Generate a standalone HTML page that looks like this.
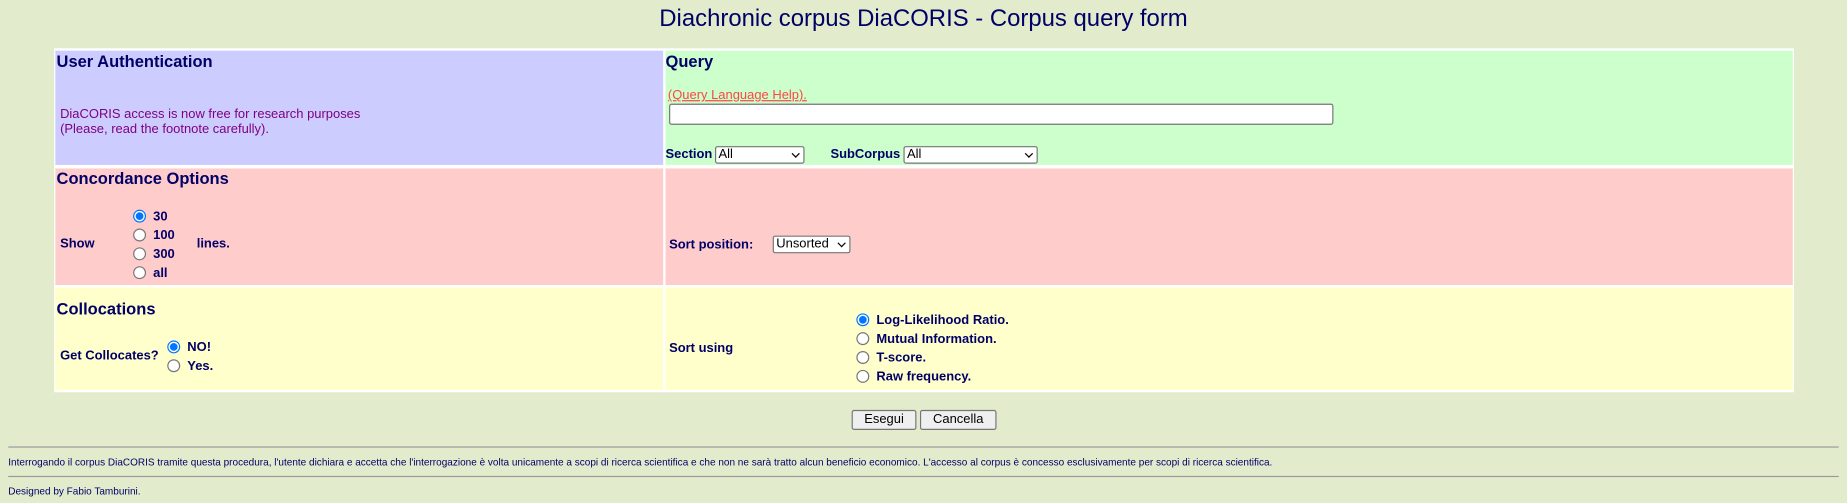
<!DOCTYPE html>
<html><head><meta charset="utf-8"><style>
html,body{margin:0;padding:0}
body{width:1847px;height:503px;background:#e3ebcd;font-family:"Liberation Sans",sans-serif;color:#000066;position:relative;overflow:hidden}
#w{position:absolute;left:0;top:0;width:1568px;height:427px;transform:scale(1.17793);transform-origin:0 0}
.a{position:absolute;white-space:nowrap}
.c{position:absolute}
h3{margin:0;font-size:14px;font-weight:bold;position:absolute}
.b{font-size:11px;font-weight:bold}
.r{position:absolute;width:9px;height:9px;border:1px solid #767676;border-radius:50%;background:#fff}
.r.on{border-color:#0075ff;background:radial-gradient(circle,#0075ff 0 3px,#fff 3.5px)}
.sel{position:absolute;border:1px solid #767676;border-radius:2px;background:#fff;font-size:11px;height:13px;line-height:13px;padding-left:2px;color:#000}
.sel:after{content:"";position:absolute;right:4px;top:3px;width:4px;height:4px;border-right:1.5px solid #000;border-bottom:1.5px solid #000;transform:rotate(45deg)}
.btn{position:absolute;border:1px solid #767676;border-radius:2px;background:#efefef;font-size:11px;color:#000;text-align:center;height:15px;line-height:15px}
hr{position:absolute;margin:0;border:0;border-top:1px solid #999;height:0}
</style></head><body><div id="w">
<div class="a" style="left:0;width:1568px;text-align:center;top:5px;font-size:20.3px">Diachronic corpus DiaCORIS - Corpus query form</div>
<div class="c" style="left:46px;top:41px;width:1477px;height:292px;background:#fff"></div>
<div class="c" style="left:47px;top:43px;width:516px;height:97px;background:#ccccff"></div>
<div class="c" style="left:565px;top:43px;width:957px;height:97px;background:#ccffcc"></div>
<div class="c" style="left:47px;top:143px;width:516px;height:99px;background:#ffcccc"></div>
<div class="c" style="left:565px;top:143px;width:957px;height:99px;background:#ffcccc"></div>
<div class="c" style="left:47px;top:244px;width:516px;height:87px;background:#ffffcc"></div>
<div class="c" style="left:565px;top:244px;width:957px;height:87px;background:#ffffcc"></div>

<h3 style="left:48px;top:44px">User Authentication</h3>
<div class="a" style="left:51px;top:91px;font-size:11px;color:#800080;line-height:13px">DiaCORIS access is now free for research purposes<br>(Please, read the footnote carefully).</div>

<h3 style="left:565px;top:44px">Query</h3>
<div class="a" style="left:567px;top:75px;font-size:11px;color:#ff4444;text-decoration:underline">(Query Language Help).</div>
<div class="c" style="left:568px;top:88px;width:562px;height:16px;border:1px solid #767676;border-radius:2px;background:#fff"></div>
<div class="a b" style="left:565px;top:125px">Section</div>
<div class="sel" style="left:607px;top:124px;width:72px">All</div>
<div class="a b" style="left:705px;top:125px">SubCorpus</div>
<div class="sel" style="left:767px;top:124px;width:110px">All</div>

<h3 style="left:48px;top:143px">Concordance Options</h3>
<div class="a b" style="left:51px;top:201px">Show</div>
<div class="r on" style="left:113px;top:178px"></div><div class="a b" style="left:130px;top:178px">30</div>
<div class="r" style="left:113px;top:194px"></div><div class="a b" style="left:130px;top:194px">100</div>
<div class="r" style="left:113px;top:210px"></div><div class="a b" style="left:130px;top:210px">300</div>
<div class="r" style="left:113px;top:226px"></div><div class="a b" style="left:130px;top:226px">all</div>
<div class="a b" style="left:167px;top:201px">lines.</div>
<div class="a b" style="left:568px;top:202px">Sort position:</div>
<div class="sel" style="left:656px;top:200px;width:62px">Unsorted</div>

<h3 style="left:48px;top:254px">Collocations</h3>
<div class="a b" style="left:51px;top:296px">Get Collocates?</div>
<div class="r on" style="left:142px;top:289px"></div><div class="a b" style="left:159px;top:289px">NO!</div>
<div class="r" style="left:142px;top:305px"></div><div class="a b" style="left:159px;top:305px">Yes.</div>
<div class="a b" style="left:568px;top:290px">Sort using</div>
<div class="r on" style="left:727px;top:266px"></div><div class="a b" style="left:744px;top:266px">Log-Likelihood Ratio.</div>
<div class="r" style="left:727px;top:282px"></div><div class="a b" style="left:744px;top:282px">Mutual Information.</div>
<div class="r" style="left:727px;top:298px"></div><div class="a b" style="left:744px;top:298px">T-score.</div>
<div class="r" style="left:727px;top:314px"></div><div class="a b" style="left:744px;top:314px">Raw frequency.</div>

<div class="btn" style="left:723px;top:348px;width:53px">Esegui</div>
<div class="btn" style="left:781px;top:348px;width:63px">Cancella</div>

<hr style="left:7px;top:379px;width:1554px">
<div class="a" style="left:7px;top:387px;font-size:8.5px">Interrogando il corpus DiaCORIS tramite questa procedura, l'utente dichiara e accetta che l'interrogazione è volta unicamente a scopi di ricerca scientifica e che non ne sarà tratto alcun beneficio economico. L'accesso al corpus è concesso esclusivamente per scopi di ricerca scientifica.</div>
<hr style="left:7px;top:404px;width:1554px">
<div class="a" style="left:7px;top:412px;font-size:8.5px">Designed by Fabio Tamburini.</div>
</div></body></html>
